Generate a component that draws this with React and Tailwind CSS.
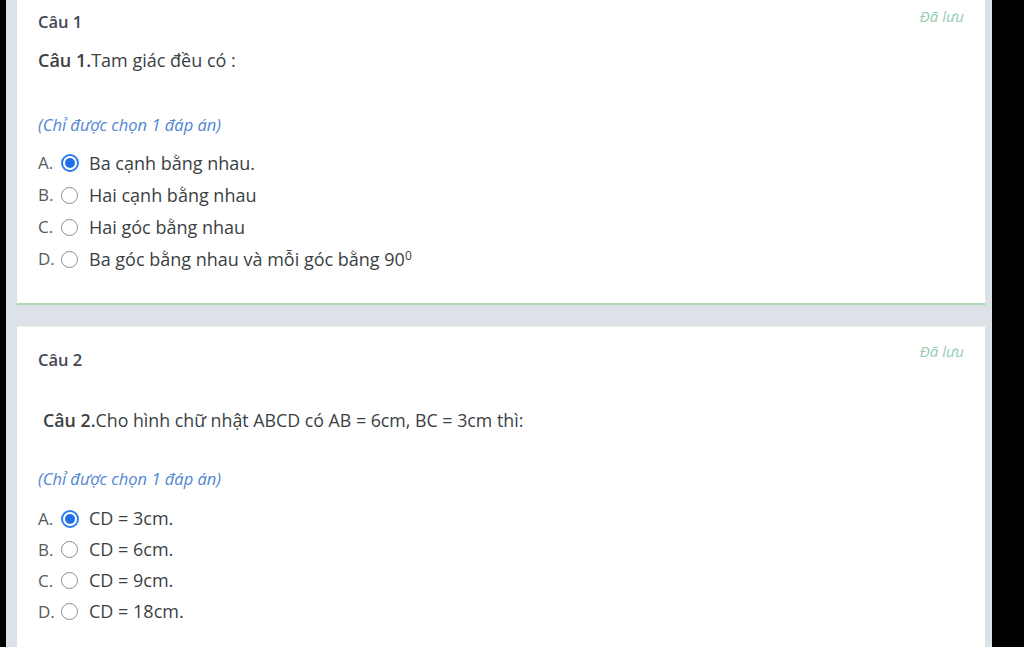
import React from "react";

const font = { fontFamily: '"Open Sans", "Noto Sans", sans-serif' };

function Radio({ checked }) {
  if (checked) {
    return (
      <span className="flex h-[18px] w-[18px] items-center justify-center rounded-full border-2 border-[#2f7cf0] bg-white">
        <span className="h-[10px] w-[10px] rounded-full bg-[#1f6fe8]" />
      </span>
    );
  }
  return <span className="block h-[17px] w-[17px] rounded-full border border-[#8a8f96] bg-white" />;
}

function Option({ letter, checked, children, h }) {
  return (
    <div className={`flex items-center ${h}`}>
      <span className="w-[23px] text-[17px] text-[#555a60]">{letter}</span>
      <span className="flex w-[28px] items-center">
        <Radio checked={checked} />
      </span>
      <span className="text-[18px] text-[#3b3f44]">{children}</span>
    </div>
  );
}

export default function App() {
  return (
    <div className="flex h-[647px] w-[1024px] overflow-hidden bg-black" style={font}>
      <div className="w-[6px] shrink-0 bg-black" />
      <div className="flex w-[986px] shrink-0 flex-col bg-[#dde2e8] pl-[10px] pr-[6px]">
        {/* Card 1 */}
        <div className="flex flex-col border-x border-b-2 border-x-[#d4e8da] border-b-[#acd9b6] bg-white pl-[21px] pr-[21px] pb-[28px]">
          <div className="flex items-start justify-between">
            <div className="pt-[12px] text-[16.5px] font-semibold leading-[20px] text-[#3f4753]">Câu 1</div>
            <div className="pt-[8px] text-[15px] italic leading-[16px] text-[#93cdb0]">Đã lưu</div>
          </div>
          <div className="mt-[16px] text-[18px] leading-[24px] text-[#3b3f44]">
            <span className="font-semibold">Câu 1.</span>Tam giác đều có :
          </div>
          <div className="mt-[43px] text-[16.5px] italic leading-[20px] text-[#4f86d4]">(Chỉ được chọn 1 đáp án)</div>
          <div className="mt-[12px] flex flex-col">
            <Option letter="A." checked h="h-[32px]">Ba cạnh bằng nhau.</Option>
            <Option letter="B." h="h-[32px]">Hai cạnh bằng nhau</Option>
            <Option letter="C." h="h-[32px]">Hai góc bằng nhau</Option>
            <Option letter="D." h="h-[32px]">
              Ba góc bằng nhau và mỗi góc bằng 90<sup className="text-[12px]">0</sup>
            </Option>
          </div>
        </div>
        {/* Card 2 */}
        <div className="mt-[21px] flex flex-col border-x border-t border-x-[#d4e8da] border-t-[#e4eee7] bg-white pl-[21px] pr-[21px] pb-[40px]">
          <div className="flex items-start justify-between">
            <div className="pt-[23px] text-[16.5px] font-semibold leading-[20px] text-[#3f4753]">Câu 2</div>
            <div className="pt-[16px] text-[15px] italic leading-[16px] text-[#93cdb0]">Đã lưu</div>
          </div>
          <div className="mt-[38px] pl-[5px] text-[17.8px] leading-[24px] text-[#3b3f44]">
            <span className="font-semibold">Câu 2.</span>Cho hình chữ nhật ABCD có AB = 6cm, BC = 3cm thì:
          </div>
          <div className="mt-[37px] text-[16.5px] italic leading-[20px] text-[#4f86d4]">(Chỉ được chọn 1 đáp án)</div>
          <div className="mt-[14px] flex flex-col">
            <Option letter="A." checked h="h-[31px]">CD = 3cm.</Option>
            <Option letter="B." h="h-[31px]">CD = 6cm.</Option>
            <Option letter="C." h="h-[31px]">CD = 9cm.</Option>
            <Option letter="D." h="h-[31px]">CD = 18cm.</Option>
          </div>
        </div>
      </div>
      <div className="flex-1 bg-black" />
    </div>
  );
}
